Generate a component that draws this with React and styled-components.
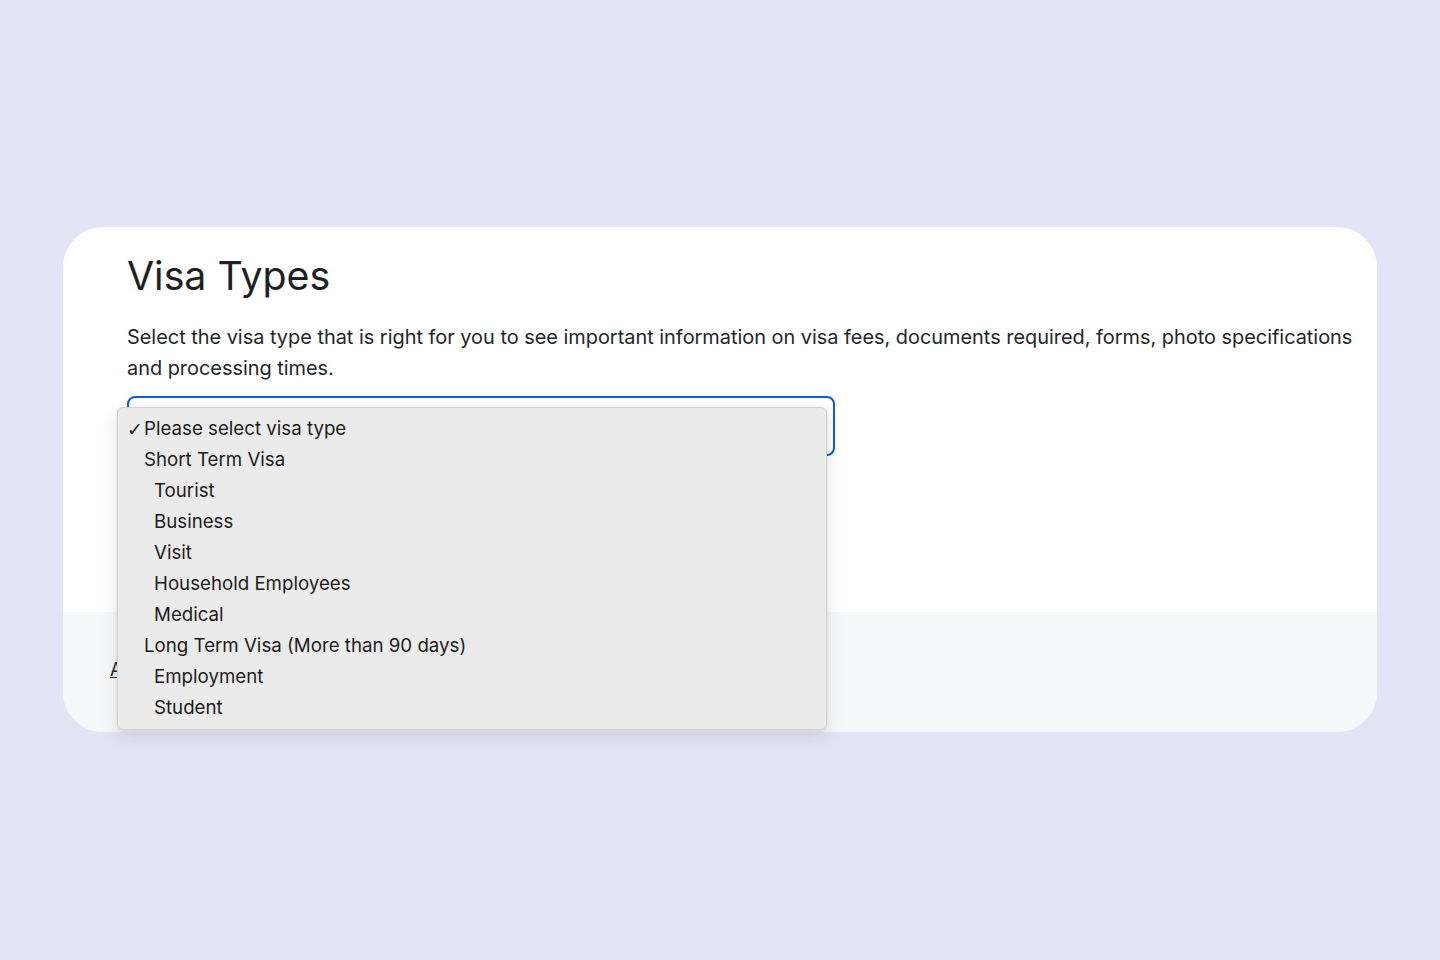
import React from 'react';
import styled, { createGlobalStyle } from 'styled-components';

const GlobalStyle = createGlobalStyle`
  html, body {
    margin: 0;
    padding: 0;
    background: #e3e4f6;
  }
  body {
    font-family: Inter, "Noto Sans", Arial, sans-serif;
    color: #1f2326;
  }
`

const Page = styled.div`
  width: 1440px;
  height: 960px;
  box-sizing: border-box;
  padding: 227px 63px 0;
`

const Card = styled.section`
  background: #ffffff;
  border-radius: 40px;
  height: 505px;
  display: flex;
  flex-direction: column;
  position: relative;
`

const Main = styled.div`
  height: 385px;
  box-sizing: border-box;
  padding: 25px 24px 0 64px;
`

const Title = styled.h1`
  margin: 0;
  font-size: 39.3px;
  line-height: 48px;
  font-weight: 400;
  color: #1e2124;
`

const Intro = styled.p`
  margin: 22px 0 0;
  font-size: 19.9px;
  line-height: 31px;
  color: #22262a;
`

const SelectWrap = styled.div`
  position: relative;
  margin-top: 12px;
  width: 708px;
`

const SelectBox = styled.div`
  height: 60px;
  box-sizing: border-box;
  border: 2px solid #0b5fcf;
  border-radius: 8px;
  background: #fff;
`

const Menu = styled.ul`
  position: absolute;
  left: -10px;
  top: 11px;
  width: 710px;
  margin: 0;
  padding: 5px 0 6px;
  list-style: none;
  box-sizing: border-box;
  background: #ecebeb;
  border: 1px solid #d2d1d1;
  border-radius: 6px;
  box-shadow: 0 6px 18px rgba(0, 0, 0, 0.12), 0 1px 3px rgba(0, 0, 0, 0.08);
  z-index: 5;
`

const Option = styled.li`
  position: relative;
  height: 31px;
  display: flex;
  align-items: center;
  padding-left: ${p => (p.indent ? 36 : 26)}px;
  font-family: Inter, "Noto Sans", Arial, sans-serif;
  font-size: 18.7px;
  color: #1c1c1c;
`

const Check = styled.span`
  position: absolute;
  left: 9px;
  font-size: 19px;
  font-family: "DejaVu Sans", sans-serif;
  color: #1c1c1c;
`

const Footer = styled.footer`
  flex: 1;
  background: #f7f8fa;
  border-radius: 0 0 40px 40px;
  display: flex;
  align-items: center;
  padding-left: 47px;
  padding-bottom: 6px;
`

const FooterLink = styled.a`
  font-size: 18px;
  color: #22262a;
  text-decoration: underline;
`

const options = [
  { label: 'Please select visa type', selected: true },
  { label: 'Short Term Visa' },
  { label: 'Tourist', indent: true },
  { label: 'Business', indent: true },
  { label: 'Visit', indent: true },
  { label: 'Household Employees', indent: true },
  { label: 'Medical', indent: true },
  { label: 'Long Term Visa (More than 90 days)' },
  { label: 'Employment', indent: true },
  { label: 'Student', indent: true },
]

export default function App() {
  return (
    <Page>
      <GlobalStyle />
      <Card>
        <Main>
          <Title>Visa Types</Title>
          <Intro>
            Select the visa type that is right for you to see important information on visa fees, documents required, forms, photo specifications and processing times.
          </Intro>
          <SelectWrap>
            <SelectBox />
            <Menu role="listbox">
              {options.map(o => (
                <Option key={o.label} indent={o.indent ? 1 : 0}>
                  {o.selected && <Check>✓</Check>}
                  {o.label}
                </Option>
              ))}
            </Menu>
          </SelectWrap>
        </Main>
        <Footer>
          <FooterLink href="#">All visa types</FooterLink>
        </Footer>
      </Card>
    </Page>
  );
}
